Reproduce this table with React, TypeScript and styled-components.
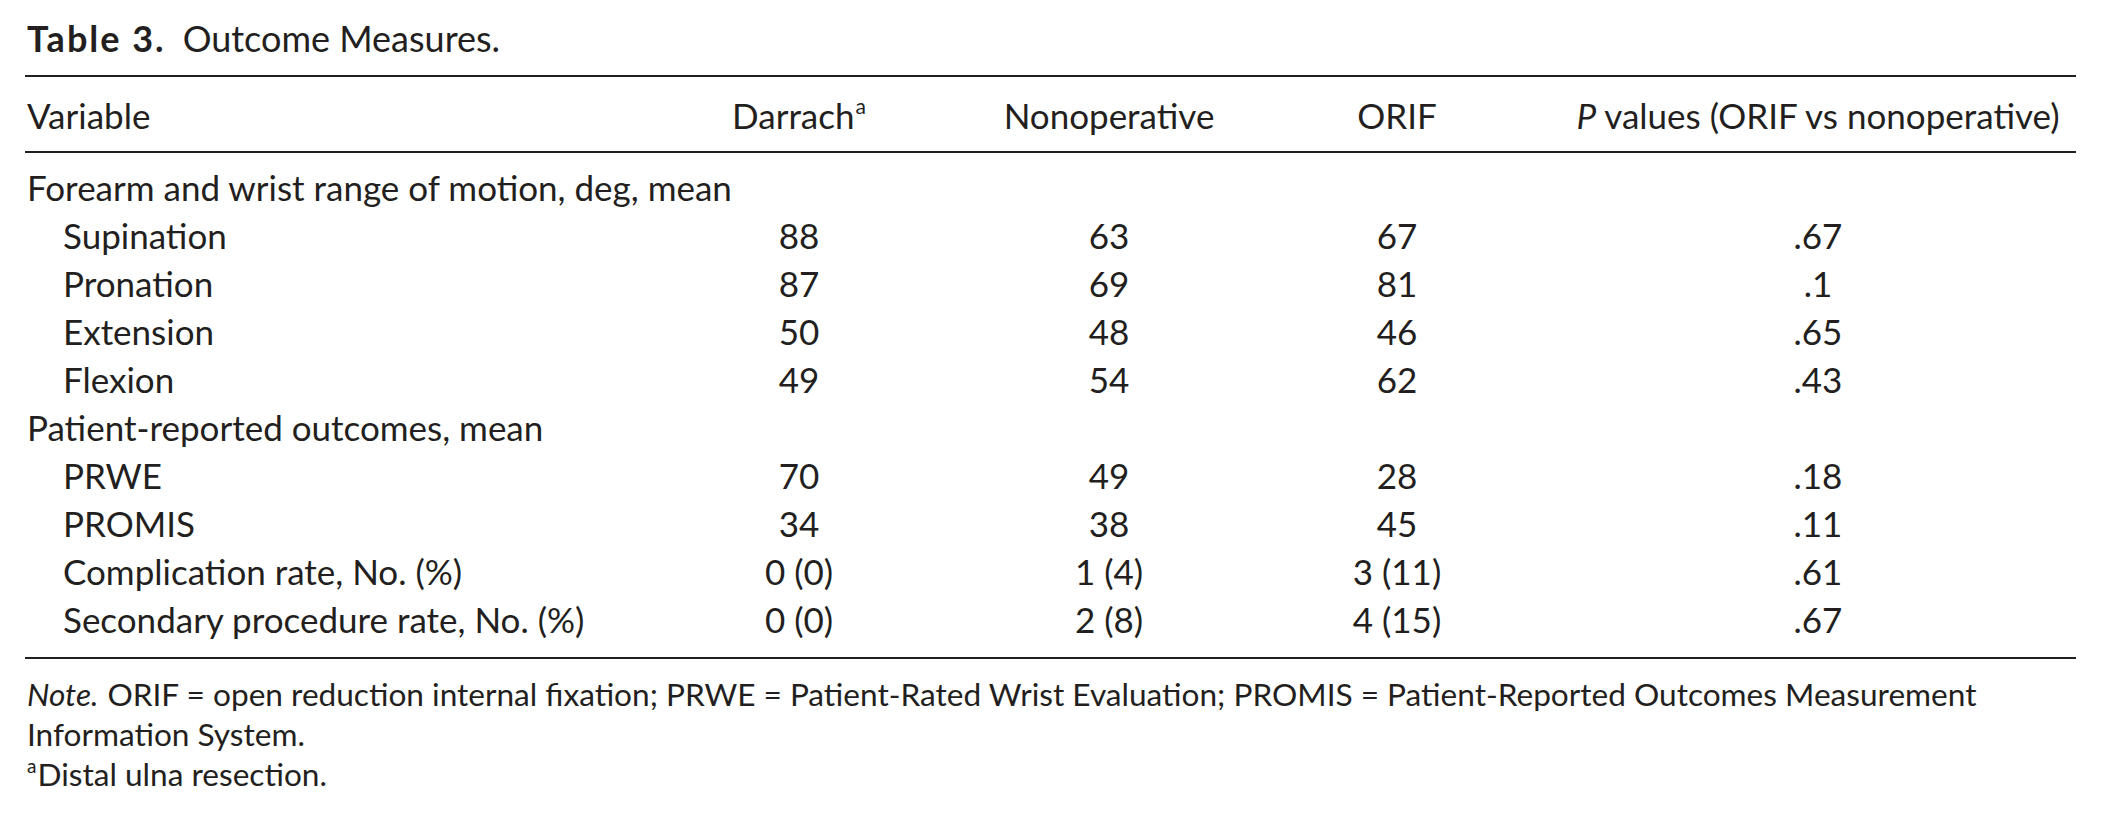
import React from "react";
import styled, { createGlobalStyle } from "styled-components";

const GlobalStyle = createGlobalStyle`
  html, body {
    margin: 0;
    padding: 0;
    background: #ffffff;
  }
  body {
    font-family: Lato, "Noto Sans", sans-serif;
    color: #231f20;
  }
`;

const Page = styled.div`
  padding: 14px 26px 0 25px;
  width: 2051px;
`;

const Caption = styled.div`
  font-size: 36px;
  line-height: 48px;
  padding-left: 2px;
  margin-bottom: 13px;
`;

const CaptionLabel = styled.span`
  font-weight: 700;
  letter-spacing: 2px;
  margin-right: 17px;
`;

const Table = styled.table`
  width: 2051px;
  table-layout: fixed;
  border-collapse: collapse;
  font-size: 35px;
  line-height: 48px;
  border-top: 2px solid #231f20;
  border-bottom: 2px solid #231f20;
`;

const HeadRow = styled.tr`
  border-bottom: 2px solid #231f20;
`;

const Cell = styled.td<{
  $align?: "left" | "center";
  $indent?: boolean;
  $padRight?: number;
  $padTop?: number;
  $padBottom?: number;
}>`
  padding: ${(p) => p.$padTop ?? 0}px ${(p) => p.$padRight ?? 0}px ${(p) => p.$padBottom ?? 0}px
    ${(p) => (p.$indent ? 38 : 2)}px;
  text-align: ${(p) => p.$align ?? "center"};
  white-space: nowrap;
  font-weight: 400;
`;

const HeadCell = styled(Cell).attrs({ as: "th" })``;

const Sup = styled.sup`
  font-size: 0.6em;
  line-height: 0;
  vertical-align: 0.7em;
  margin-left: 1px;
`;

const NoteSup = styled(Sup)`
  margin-left: 0;
  margin-right: 1px;
`;

const Italic = styled.i`
  font-style: italic;
`;

const NoteLabel = styled.i`
  font-style: italic;
  display: inline-block;
  margin-right: 9px;
`;

const Notes = styled.div`
  font-size: 31.6px;
  line-height: 40px;
  padding: 15px 0 0 2px;
`;

const NoteLine = styled.div``;

type Row = {
  label: string;
  indent: boolean;
  values?: [string, string, string, string];
};

const rows: Row[] = [
  { label: "Forearm and wrist range of motion, deg, mean", indent: false },
  { label: "Supination", indent: true, values: ["88", "63", "67", ".67"] },
  { label: "Pronation", indent: true, values: ["87", "69", "81", ".1"] },
  { label: "Extension", indent: true, values: ["50", "48", "46", ".65"] },
  { label: "Flexion", indent: true, values: ["49", "54", "62", ".43"] },
  { label: "Patient-reported outcomes, mean", indent: false },
  { label: "PRWE", indent: true, values: ["70", "49", "28", ".18"] },
  { label: "PROMIS", indent: true, values: ["34", "38", "45", ".11"] },
  { label: "Complication rate, No. (%)", indent: true, values: ["0 (0)", "1 (4)", "3 (11)", ".61"] },
  { label: "Secondary procedure rate, No. (%)", indent: true, values: ["0 (0)", "2 (8)", "4 (15)", ".67"] },
];

const ORIF_PAD = 72;

export default function App() {
  return (
    <>
      <GlobalStyle />
      <Page>
        <Caption>
          <CaptionLabel>Table 3.</CaptionLabel>Outcome Measures.
        </Caption>
        <Table>
          <colgroup>
            <col style={{ width: 661 }} />
            <col style={{ width: 224 }} />
            <col style={{ width: 396 }} />
            <col style={{ width: 252 }} />
            <col style={{ width: 518 }} />
          </colgroup>
          <thead>
            <HeadRow>
              <HeadCell $align="left" $padTop={14} $padBottom={12}>
                Variable
              </HeadCell>
              <HeadCell $padTop={14} $padBottom={12}>
                Darrach<Sup>a</Sup>
              </HeadCell>
              <HeadCell $padTop={14} $padBottom={12}>
                Nonoperative
              </HeadCell>
              <HeadCell $padTop={14} $padBottom={12} $padRight={ORIF_PAD}>
                ORIF
              </HeadCell>
              <HeadCell $padTop={14} $padBottom={12}>
                <Italic>P</Italic> values (ORIF vs nonoperative)
              </HeadCell>
            </HeadRow>
          </thead>
          <tbody>
            {rows.map((r, i) => {
              const first = i === 0;
              const last = i === rows.length - 1;
              const pt = first ? 10 : 0;
              const pb = last ? 14 : 0;
              return (
                <tr key={r.label}>
                  <Cell $align="left" $indent={r.indent} $padTop={pt} $padBottom={pb}>
                    {r.label}
                  </Cell>
                  <Cell $padTop={pt} $padBottom={pb}>{r.values?.[0] ?? ""}</Cell>
                  <Cell $padTop={pt} $padBottom={pb}>{r.values?.[1] ?? ""}</Cell>
                  <Cell $padTop={pt} $padBottom={pb} $padRight={ORIF_PAD}>
                    {r.values?.[2] ?? ""}
                  </Cell>
                  <Cell $padTop={pt} $padBottom={pb}>{r.values?.[3] ?? ""}</Cell>
                </tr>
              );
            })}
          </tbody>
        </Table>
        <Notes>
          <NoteLine>
            <NoteLabel>Note.</NoteLabel>ORIF = open reduction internal fixation; PRWE = Patient-Rated Wrist
            Evaluation; PROMIS = Patient-Reported Outcomes Measurement Information System.
          </NoteLine>
          <NoteLine>
            <NoteSup>a</NoteSup>Distal ulna resection.
          </NoteLine>
        </Notes>
      </Page>
    </>
  );
}
